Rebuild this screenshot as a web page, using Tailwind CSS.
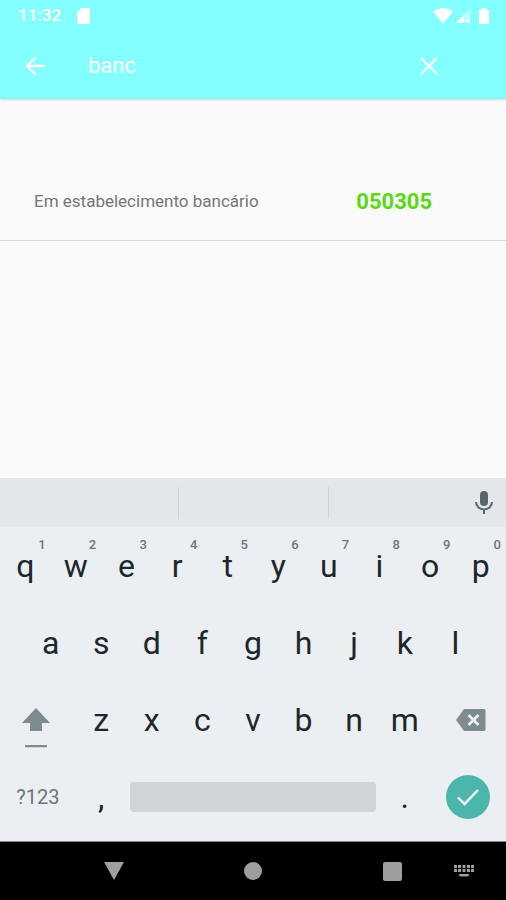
<!DOCTYPE html>
<html lang="pt-BR">
<head>
  <meta charset="UTF-8" />
  <meta name="viewport" content="width=device-width, initial-scale=1" />
  <title>Busca</title>
  <script src="https://cdn.jsdelivr.net/npm/@tailwindcss/browser@4"></script>
</head>
<body class="min-h-screen flex flex-col bg-[#fafafa] font-[Roboto,sans-serif]">

  <!-- Barra superior -->
  <header class="bg-[#84ffff] text-white shadow">
    <div class="h-8 flex items-center pl-[18px] pr-[17px]">
      <span class="text-[17px] font-medium">11:32</span>
      <svg class="ml-4 w-[13px] h-4" viewBox="0 0 13 16" fill="currentColor"><path d="M4.500 0H12a1 1 0 0 1 1 1v14a1 1 0 0 1-1 1H1a1 1 0 0 1-1-1V4.500z" /><path d="M5 2.500v2.500M8 2.500v2.500" stroke="#84ffff" stroke-opacity=".3" /></svg>
      <div class="ml-auto flex items-center">
        <svg class="w-5 h-4" viewBox="0 0 20 16" fill="currentColor"><path d="M0 3.500C6-1 14-1 20 3.500L10 15.500z" /></svg>
        <svg class="ml-0.5 w-4 h-4" viewBox="0 0 16 16" fill="currentColor"><path d="M15 1v14H1z" opacity=".45" /><path d="M9 7v8H1z" /><path d="M11 11h4v4h-4z" opacity=".7" /></svg>
        <svg class="ml-2 w-[10px] h-4" viewBox="0 0 10 16" fill="currentColor"><path d="M3 0h4v1.500h2a1 1 0 0 1 1 1V15a1 1 0 0 1-1 1H1a1 1 0 0 1-1-1V2.500a1 1 0 0 1 1-1h2z" /></svg>
      </div>
    </div>
    <form class="h-[67px] flex items-center pl-6 pr-[65px]" onsubmit="return false">
      <button type="button" aria-label="Voltar" class="shrink-0">
        <svg class="w-6 h-6" viewBox="0 0 24 24" fill="none" stroke="currentColor" stroke-width="2.300"><path d="M21 12H3.500M12 3l-9 9 9 9" /></svg>
      </button>
      <input id="busca" type="text" aria-label="Buscar" value="banc" class="ml-10 flex-1 min-w-0 text-[22px] leading-7 outline-none" />
      <button type="button" aria-label="Limpar" onclick="limpar()" class="shrink-0">
        <svg class="w-6 h-6" viewBox="0 0 24 24" fill="none" stroke="currentColor" stroke-width="2.300"><path d="M4 4l16 16M20 4L4 20" /></svg>
      </button>
    </form>
  </header>

  <!-- Resultados -->
  <main class="flex-1 pt-16">
    <ul>
      <li class="h-[78px] flex items-center border-b border-[#d6d6d6] pl-[34px] pr-[74px]">
        <span class="text-[17px] text-[#757575]">Em estabelecimento bancário</span>
        <span class="ml-auto text-[22px] leading-7 font-bold text-[#59d916]">050305</span>
      </li>
    </ul>
  </main>

  <!-- Teclado -->
  <section class="bg-[#eceff1] text-[#1c272c] pb-1.5">
    <div class="h-[49px] grid grid-cols-[1fr_151px_1fr] items-center bg-[#e4e7e9]">
      <div class="col-start-2 h-8 border-x border-[#cfd3d5]"></div>
      <div class="flex justify-end pr-3">
        <button type="button" aria-label="Voz" class="text-[#5a666b]">
          <svg class="w-5 h-6" viewBox="0 0 20 24" fill="none" stroke="currentColor" stroke-width="2"><rect x="6" y="0" width="8" height="15" rx="4" fill="currentColor" stroke="none" /><path d="M2 11a8 7.500 0 0 0 16 0M10 18.500V23" /></svg>
        </button>
      </div>
    </div>

    <div id="linha1" class="h-[77px] grid grid-cols-10"></div>
    <div id="linha2" class="h-[77px] grid grid-cols-9 px-[5%]"></div>

    <div class="h-[77px] grid grid-cols-20">
      <button type="button" aria-label="Maiúsculas" class="col-span-3 flex items-center justify-center pr-1 text-[#7f8c8f]">
        <svg class="mt-4 w-7 h-10" viewBox="0 0 28 40" fill="currentColor"><path d="M14 0L28 15H20v8H8v-8H0zM3 37h22v2.200H3z" /></svg>
      </button>
      <div id="linha3" class="col-span-14 grid grid-cols-7"></div>
      <button type="button" aria-label="Apagar" class="col-span-3 flex items-center justify-center pl-1.5 text-[#7f8c8f]">
        <svg class="w-[30px] h-[22px]" viewBox="0 0 30 22" fill="currentColor"><path d="M8 0H28a1.500 1.500 0 0 1 1.500 1.500v19A1.500 1.500 0 0 1 28 22H8L0 11z" /><path d="M12.500 6l10 10M22.500 6l-10 10" stroke="#eceff1" stroke-width="2.800" /></svg>
      </button>
    </div>

    <div class="h-[77px] grid grid-cols-20">
      <button type="button" class="col-span-3 text-xl text-[#6b777b]">?123</button>
      <button type="button" class="col-span-2 text-[32px]">,</button>
      <button type="button" aria-label="Espaço" class="col-span-10 flex items-center px-1">
        <span class="w-full h-[30px] rounded bg-[#cfd4d7]"></span>
      </button>
      <button type="button" class="col-span-2 text-[32px]">.</button>
      <button type="button" aria-label="Confirmar" class="col-span-3 flex items-center justify-center">
        <span class="size-11 rounded-full bg-[#4db6ac] flex items-center justify-center text-white">
          <svg class="w-6 h-6" viewBox="0 0 24 24" fill="none" stroke="currentColor" stroke-width="2.400"><path d="M2 12.500l6.500 6.500L22 5" /></svg>
        </span>
      </button>
    </div>
  </section>

  <!-- Navegação do sistema -->
  <nav class="relative h-[59px] border-t border-[#8a8a8a] bg-black px-11 grid grid-cols-3 text-[#9e9e9e]">
    <button type="button" aria-label="Voltar" class="flex items-center justify-center">
      <svg class="w-5 h-[18px]" viewBox="0 0 20 18" fill="currentColor"><path d="M0 0h20L10 18z" /></svg>
    </button>
    <button type="button" aria-label="Início" class="flex items-center justify-center">
      <span class="size-[18px] rounded-full bg-[#9e9e9e]"></span>
    </button>
    <button type="button" aria-label="Recentes" class="flex items-center justify-center">
      <span class="size-[19px] rounded-xs bg-[#9e9e9e]"></span>
    </button>
    <button type="button" aria-label="Trocar teclado" class="absolute right-8 inset-y-0">
      <svg class="w-5 h-3" viewBox="0 0 20 12" fill="currentColor"><path d="M0 0h3v3H0zM4 0h3v3H4zM8.500 0h3v3h-3zM13 0h3v3h-3zM17 0h3v3h-3zM0 4h3v3H0zM4 4h3v3H4zM8.500 4h3v3h-3zM13 4h3v3h-3zM17 4h3v3h-3zM4.500 9h11l-1.500 2.500H6z" /></svg>
    </button>
  </nav>

  <script>
    const busca = document.getElementById('busca');

    function limpar() {
      busca.value = '';
      busca.focus();
    }

    function montarLinha(id, letras, numeros) {
      const linha = document.getElementById(id);
      letras.split('').forEach((letra, i) => {
        const tecla = document.createElement('button');
        tecla.type = 'button';
        tecla.className = 'relative text-[32px] leading-8';
        tecla.textContent = letra;
        tecla.onclick = () => { busca.value += letra; };
        if (numeros) {
          const num = document.createElement('span');
          num.className = 'absolute top-2.5 right-[5px] text-[13px] leading-4 font-medium text-[#6b777b]';
          num.textContent = numeros[i];
          tecla.appendChild(num);
        }
        linha.appendChild(tecla);
      });
    }

    montarLinha('linha1', 'qwertyuiop', '1234567890');
    montarLinha('linha2', 'asdfghjkl');
    montarLinha('linha3', 'zxcvbnm');
  </script>

</body>
</html>
